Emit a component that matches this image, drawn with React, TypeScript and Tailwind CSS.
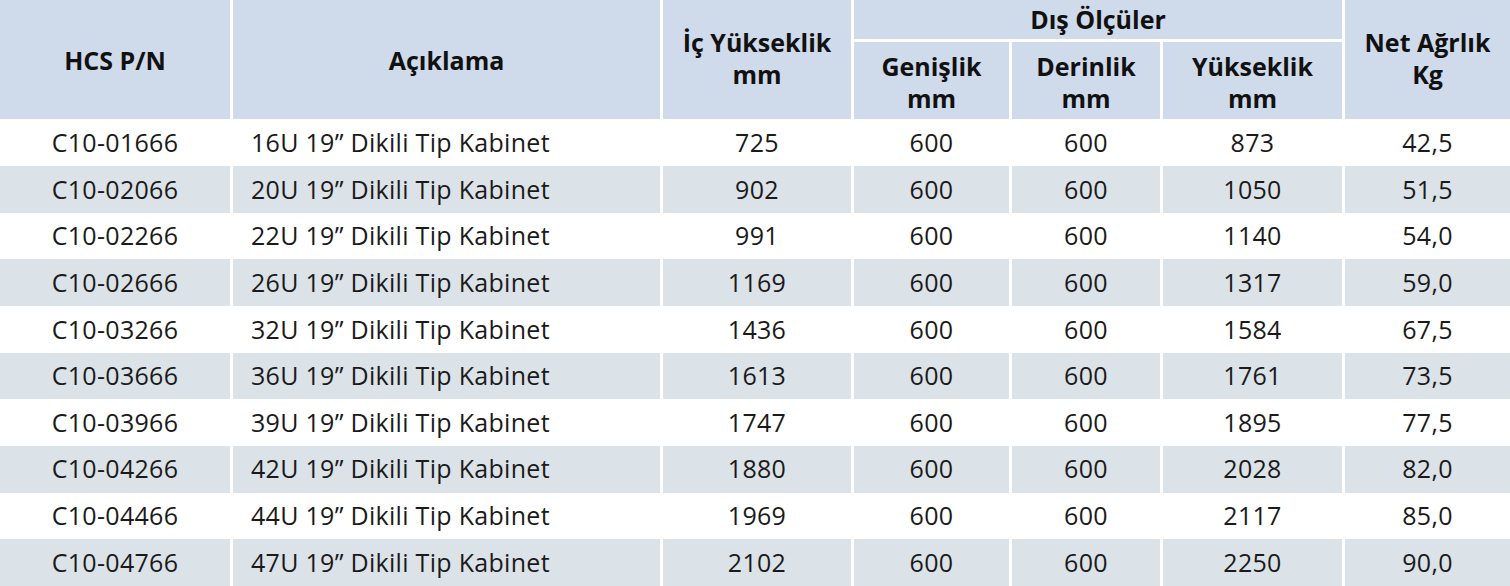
const rows: string[][] = [
  ["C10-01666", "16U 19” Dikili Tip Kabinet", "725", "600", "600", "873", "42,5"],
  ["C10-02066", "20U 19” Dikili Tip Kabinet", "902", "600", "600", "1050", "51,5"],
  ["C10-02266", "22U 19” Dikili Tip Kabinet", "991", "600", "600", "1140", "54,0"],
  ["C10-02666", "26U 19” Dikili Tip Kabinet", "1169", "600", "600", "1317", "59,0"],
  ["C10-03266", "32U 19” Dikili Tip Kabinet", "1436", "600", "600", "1584", "67,5"],
  ["C10-03666", "36U 19” Dikili Tip Kabinet", "1613", "600", "600", "1761", "73,5"],
  ["C10-03966", "39U 19” Dikili Tip Kabinet", "1747", "600", "600", "1895", "77,5"],
  ["C10-04266", "42U 19” Dikili Tip Kabinet", "1880", "600", "600", "2028", "82,0"],
  ["C10-04466", "44U 19” Dikili Tip Kabinet", "1969", "600", "600", "2117", "85,0"],
  ["C10-04766", "47U 19” Dikili Tip Kabinet", "2102", "600", "600", "2250", "90,0"],
];

const cols = "grid grid-cols-[230px_427px_188px_155px_148px_179px_165px] gap-x-[3px]";
const hcell = "bg-[#cfdaeb] flex items-center justify-center text-center font-bold text-[25px] leading-[32px] text-[#111]";

export default function App() {
  return (
    <div
      className="w-[1510px] h-[586px] bg-white overflow-hidden"
      style={{ fontFamily: '"Open Sans", "Noto Sans", sans-serif' }}
    >
      <div className={`${cols} grid-rows-[39px_77px] gap-y-[3px] h-[119px]`}>
        <div className={`${hcell} row-span-2`}>HCS P/N</div>
        <div className={`${hcell} row-span-2`}>Açıklama</div>
        <div className={`${hcell} row-span-2 pb-[4px]`}>
          İç Yükseklik
          <br />
          mm
        </div>
        <div className={`${hcell} col-span-3 pb-[2px]`}>Dış Ölçüler</div>
        <div className={`${hcell} row-span-2 pb-[4px]`}>
          Net Ağrlık
          <br />
          Kg
        </div>
        <div className={`${hcell} pt-[2px]`}>
          Genişlik
          <br />
          mm
        </div>
        <div className={`${hcell} pt-[2px]`}>
          Derinlik
          <br />
          mm
        </div>
        <div className={`${hcell} pt-[2px]`}>
          Yükseklik
          <br />
          mm
        </div>
      </div>
      <div className="flex flex-col pt-[0.4px]">
        {rows.map((r, i) => {
          const bg = i % 2 === 1 ? "bg-[#dce3e8]" : "bg-white";
          return (
            <div key={r[0]} className={`${cols} h-[46.65px]`}>
              {r.map((c, j) => (
                <div
                  key={j}
                  className={`${bg} flex items-center text-[25px] tracking-[0.3px] text-[#1a1a1a] ${
                    j === 1 ? "justify-start pl-[18px]" : "justify-center"
                  }`}
                >
                  {c}
                </div>
              ))}
            </div>
          );
        })}
      </div>
    </div>
  );
}
